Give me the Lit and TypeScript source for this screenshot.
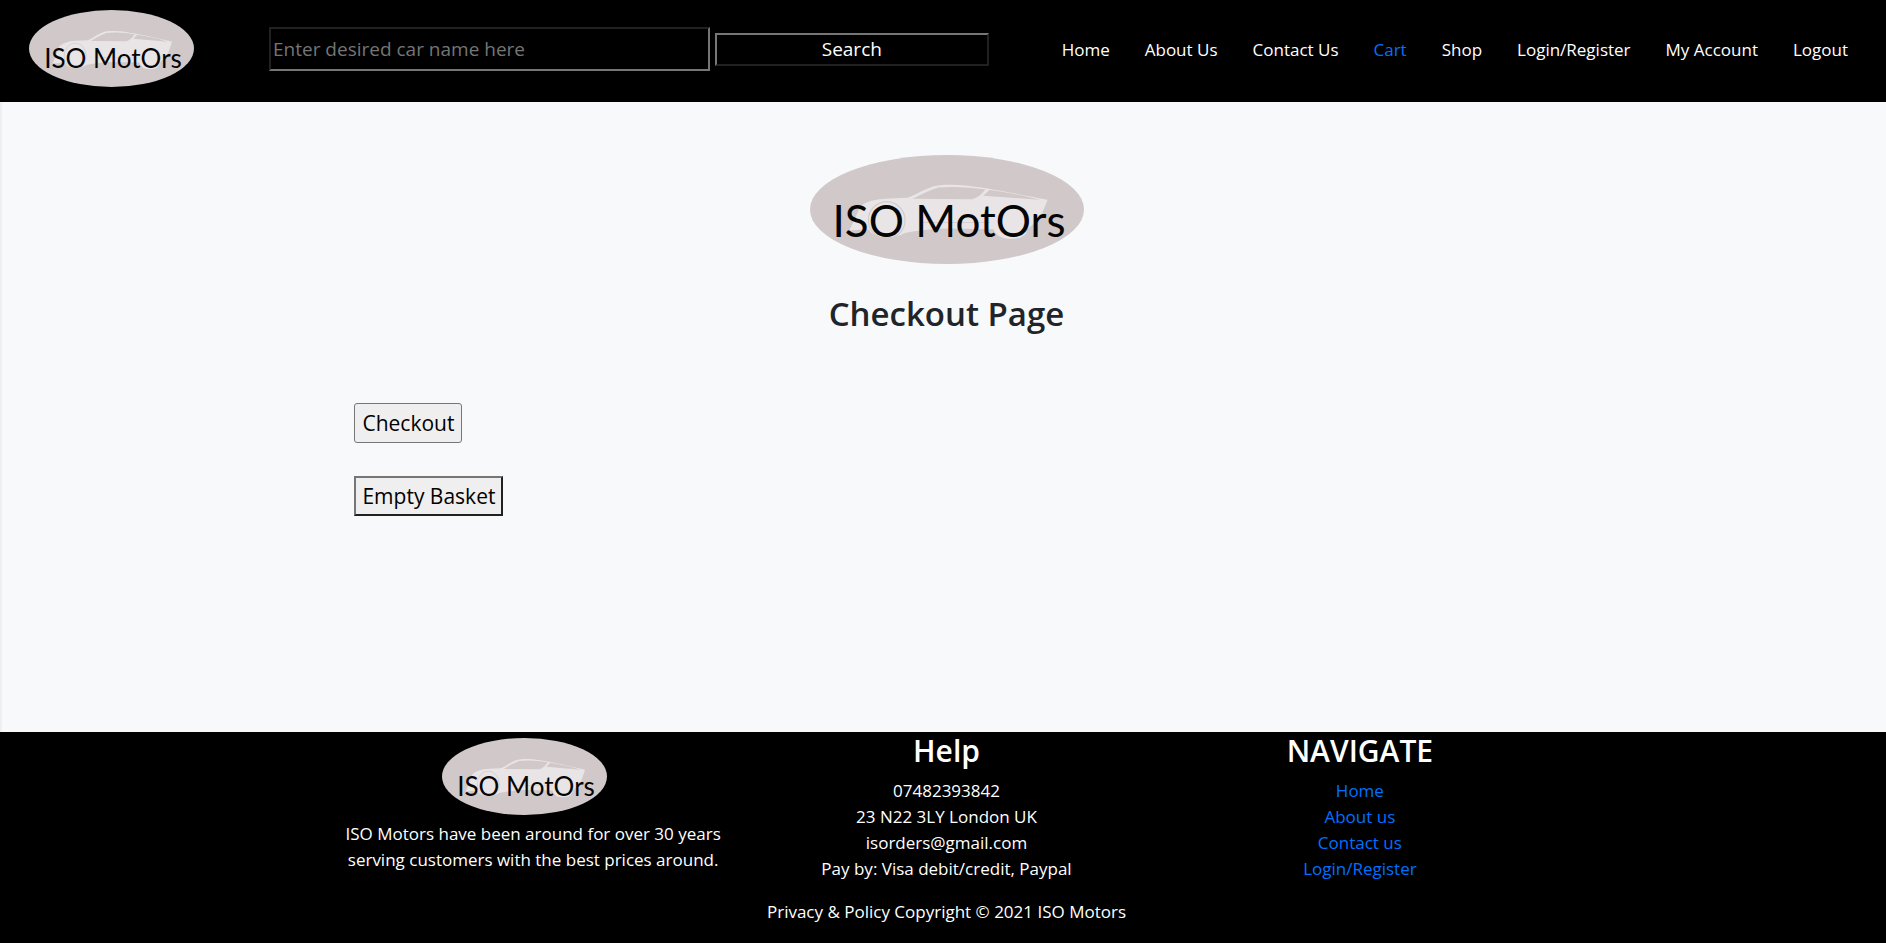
import { LitElement, html, css, svg } from "lit";
import { customElement, property } from "lit/decorators.js";

@customElement("iso-logo")
class IsoLogo extends LitElement {
  @property({ type: Boolean, reflect: true }) large = false;

  static styles = css`
    :host { display: block; width: 165px; }
    :host([large]) { width: 274px; }
    .logo { display: block; width: 100%; height: auto; }
    .name { font-family: Lato, sans-serif; fill: #050505; }
  `;

  render() {
    const w = this.large ? 274 : 165;
    const h = this.large ? 109 : 77;
    const size = this.large ? 44 : 26;
    return html`
      <svg class="logo" viewBox="0 0 ${w} ${h}" role="img" aria-label="ISO MotOrs">
        <svg width=${w} height=${h} viewBox="0 0 822 326" preserveAspectRatio="none">
          <ellipse cx="411" cy="163" rx="411" ry="163" fill="#d0c8c9"></ellipse>
          <path fill="#e9e4e5" fill-rule="evenodd" d="M118 226 L140 178 L152 152 Q175 133 235 130 L292 128 C330 115 355 90 405 89 C470 87 540 100 713 134 L690 190 L652 222 Q650 251 600 251 Q560 250 550 222 L400 220 Q330 224 285 233 Q262 246 228 246 Q190 245 175 222 Z
          M308 131 Q350 108 385 97 Q460 92 526 103 Q505 130 485 132 Z M520 122 L539 105 Q610 113 690 134 Z"></path>
          <circle cx="230" cy="195" r="55" fill="none" stroke="#d0c8c9" stroke-width="3"></circle>
          <path d="M330 202 H540" stroke="#d8d0d1" stroke-width="3"></path>
        </svg>
        ${svg`<text class="name" x=${this.large ? 139 : 84} y=${this.large ? 82 : 58} font-size=${size} text-anchor="middle">ISO MotOrs</text>`}
      </svg>`;
  }
}

interface NavItem { label: string; active?: boolean; }

@customElement("app-root")
class AppRoot extends LitElement {
  private nav: NavItem[] = [
    { label: "Home" }, { label: "About Us" }, { label: "Contact Us" }, { label: "Cart", active: true },
    { label: "Shop" }, { label: "Login/Register" }, { label: "My Account" }, { label: "Logout" },
  ];
  private help = ["07482393842", "23 N22 3LY London UK", "isorders@gmail.com", "Pay by: Visa debit/credit, Paypal"];
  private links = ["Home", "About us", "Contact us", "Login/Register"];

  static styles = css`
    * { box-sizing: border-box; }
    :host {
      display: flex; flex-direction: column; min-height: 100vh;
      font-family: "Open Sans", "Noto Sans", sans-serif; font-size: 17px; line-height: 26px;
      color: #212529; background: #f8f9fa;
    }
    a { color: #0070ff; text-decoration: none; }
    .top {
      display: flex; align-items: flex-start; padding: 10px 38px 15px 29px;
      background: #000; color: #fff;
    }
    .top nav { margin: 27px 0 0 auto; }
    .search { display: flex; align-items: center; gap: 5px; flex: 0 1 720px; margin: 17px 0 0 75px; }
    .field {
      flex: 440 1 0; min-width: 0; height: 44px; padding: 1px 2px; border: 2px inset #767676;
      background: #000; color: #fff; font: 19px "Open Sans", sans-serif;
    }
    .field::placeholder { color: #757575; }
    .go {
      flex: 275 1 0; height: 33px; padding: 0; border: 2px outset #767676;
      background: #000; color: #fff; font: 19px "Open Sans", sans-serif;
    }
    .menu { display: flex; gap: 35px; margin: 0; padding: 0; list-style: none; white-space: nowrap; }
    .menu a { color: #fff; }
    .menu a.active { color: #0070ff; }
    main { flex: 1; padding: 53px 0 0 5px; border-left: 2px solid #eff0f1; }
    .wrap { width: 66%; margin: 0 auto; }
    .intro { display: flex; flex-direction: column; align-items: center; }
    h1 { margin: 28px 0 0; font-size: 33px; line-height: 44px; font-weight: 600; }
    .actions { display: flex; flex-direction: column; align-items: flex-start; gap: 33px; padding: 67px 28px 0; }
    .action {
      height: 40px; padding: 0 7px; font: 21px "Open Sans", sans-serif;
      color: #000; background: #efefef; border: 1px solid #767676; border-radius: 3px;
    }
    .plain { padding: 0 6px; border: 2px outset #767676; border-radius: 0; }
    footer { padding-left: 7px; background: #000; color: #fff; text-align: center; }
    .cols { display: grid; grid-template-columns: repeat(3, 1fr); }
    .brand { display: flex; flex-direction: column; align-items: center; gap: 6px; padding-top: 6px; }
    .brand iso-logo { margin-right: 18px; }
    .blurb { max-width: 384px; }
    p { margin: 0; }
    h2 { margin: 0 0 8px; font-size: 30px; line-height: 38px; font-weight: 600; }
    .list { margin: 0; padding: 0; list-style: none; }
    .legal { padding: 17px 0 18px; }
  `;

  render() {
    return html`
      <header class="top">
        <iso-logo></iso-logo>
        <form class="search" role="search" @submit=${(e: Event) => e.preventDefault()}>
          <input class="field" type="text" aria-label="Car name" placeholder="Enter desired car name here">
          <button class="go" type="submit">Search</button>
        </form>
        <nav>
          <ul class="menu">
            ${this.nav.map((n) => html`<li><a class=${n.active ? "active" : ""} href="#">${n.label}</a></li>`)}
          </ul>
        </nav>
      </header>
      <main>
        <div class="wrap">
          <div class="intro"><iso-logo large></iso-logo><h1>Checkout Page</h1></div>
          <div class="actions">
            <button class="action" type="button">Checkout</button>
            <button class="action plain" type="button">Empty Basket</button>
          </div>
        </div>
      </main>
      <footer>
        <div class="wrap cols">
          <section class="brand">
            <iso-logo></iso-logo>
            <p class="blurb">ISO Motors have been around for over 30 years serving customers with the best prices around.</p>
          </section>
          <section>
            <h2>Help</h2>
            <ul class="list">${this.help.map((t) => html`<li>${t}</li>`)}</ul>
          </section>
          <section>
            <h2>NAVIGATE</h2>
            <ul class="list">${this.links.map((t) => html`<li><a href="#">${t}</a></li>`)}</ul>
          </section>
        </div>
        <p class="legal">Privacy &amp; Policy Copyright © 2021 ISO Motors</p>
      </footer>`;
  }
}
